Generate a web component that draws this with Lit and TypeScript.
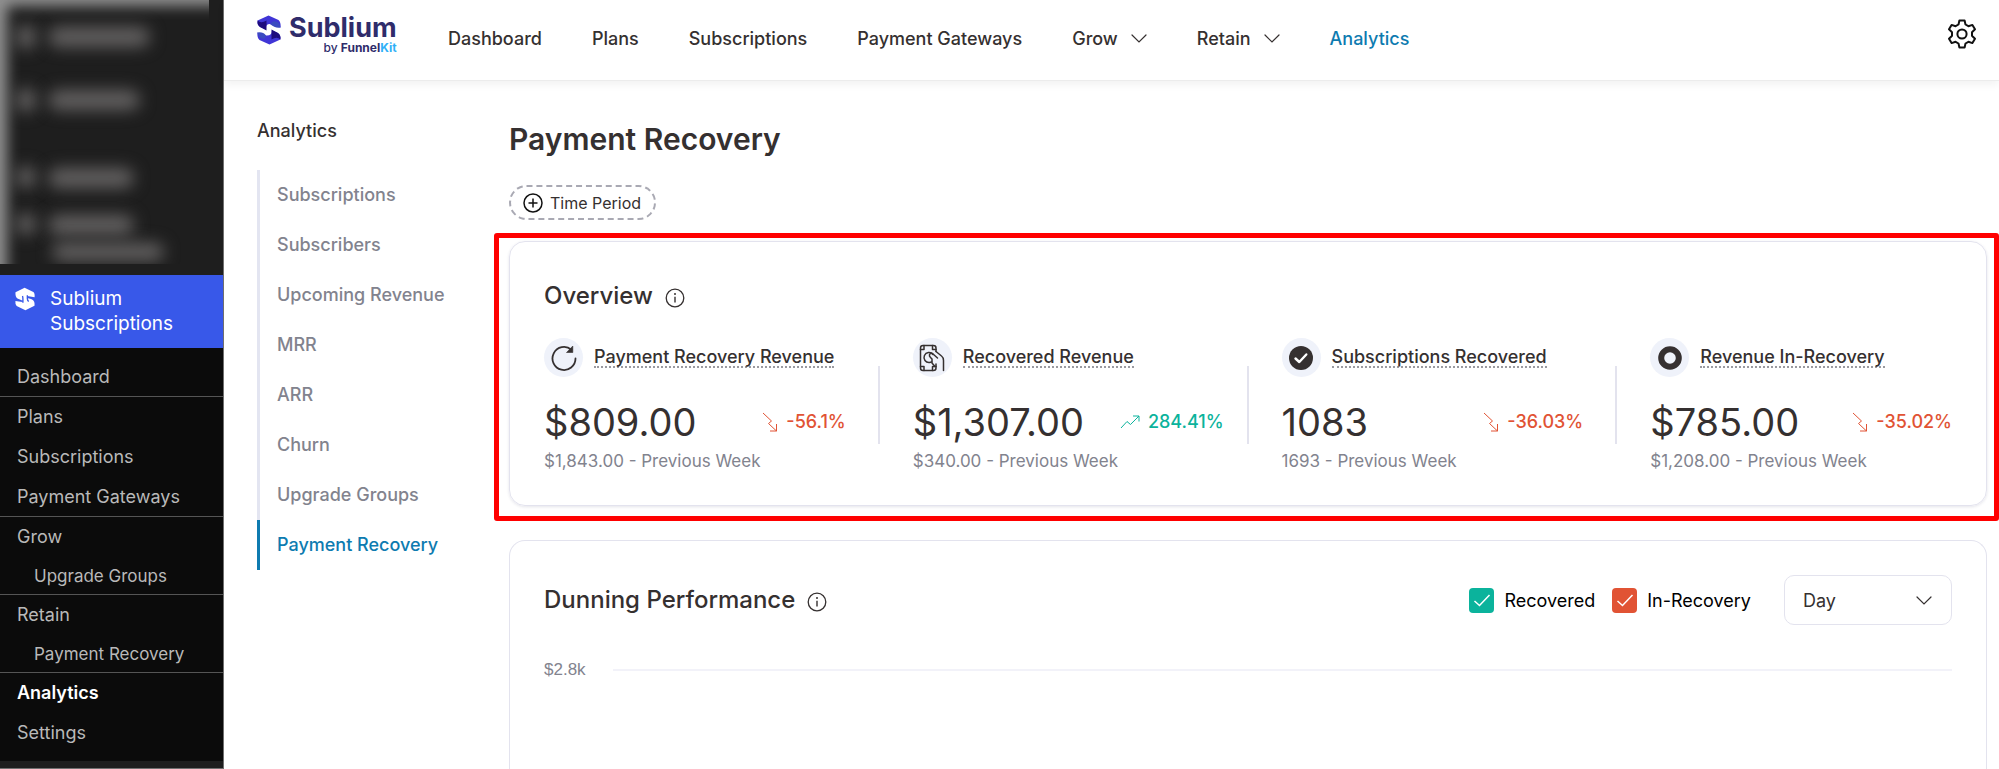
import { LitElement, html, css, svg } from "lit";
import { customElement } from "lit/decorators.js";
import { classMap } from "lit/directives/class-map.js";

type Item = { label: string; kind?: "sub" | "current"; rule?: boolean };

const adminMenu: Item[] = [
  { label: "Dashboard", rule: true },
  { label: "Plans" },
  { label: "Subscriptions" },
  { label: "Payment Gateways", rule: true },
  { label: "Grow" },
  { label: "Upgrade Groups", kind: "sub", rule: true },
  { label: "Retain" },
  { label: "Payment Recovery", kind: "sub", rule: true },
  { label: "Analytics", kind: "current" },
  { label: "Settings" },
];

const topNav = [
  { label: "Dashboard" },
  { label: "Plans" },
  { label: "Subscriptions" },
  { label: "Payment Gateways" },
  { label: "Grow", menu: true },
  { label: "Retain", menu: true },
  { label: "Analytics", active: true },
];

const reports = [
  "Subscriptions",
  "Subscribers",
  "Upcoming Revenue",
  "MRR",
  "ARR",
  "Churn",
  "Upgrade Groups",
  "Payment Recovery",
];

const refreshIcon = svg`<path d="M24.500 13.500A11.500 11.500 0 1 1 20.400 4.700" fill="none" stroke="#353030" stroke-width="1.800" stroke-linecap="round"/><path d="M21.800 1v6.500h-6.300z" fill="#353030" stroke="#353030" stroke-width=".6" stroke-linejoin="round"/>`;
const moneyIcon = svg`<g fill="none" stroke="#353030" stroke-width="1.500" stroke-linejoin="round" stroke-linecap="round"><path d="M17 7.500V4Q17 1.500 14.500 1.500H4Q1.500 1.500 1.500 4V24Q1.500 26.500 4 26.500H14.500Q17 26.500 17 24V20"/><path d="M1.500 5.500H5V1.500M17 5.500H13.500V1.500M1.500 22.500H5V26.500M17 22.500H13.500V26.500"/><path d="M14 10.500A5 5 0 1 0 10.500 18.500L12.500 18"/><path d="M18.500 14L13.500 9.500Q11.500 8.500 10.500 10.500Q10 12 11.500 13.500L13 15V19L16 22.500"/><path d="M17 7.500L22.500 12Q24.500 13.500 24.500 16.500V26.500"/></g>`;
const checkIcon = svg`<circle cx="13" cy="13" r="12" fill="#353030"/><path d="M7.500 13.500l3.800 3.500 7-7.500" fill="none" stroke="#fff" stroke-width="2.400" stroke-linecap="round" stroke-linejoin="round"/>`;
const ringIcon = svg`<circle cx="13" cy="13" r="8.800" fill="none" stroke="#353030" stroke-width="6"/>`;

const stats = [
  { label: "Payment Recovery Revenue", value: "$809.00", prev: "$1,843.00", change: "-56.1%", up: false, icon: refreshIcon },
  { label: "Recovered Revenue", value: "$1,307.00", prev: "$340.00", change: "284.41%", up: true, icon: moneyIcon },
  { label: "Subscriptions Recovered", value: "1083", prev: "1693", change: "-36.03%", up: false, icon: checkIcon },
  { label: "Revenue In-Recovery", value: "$785.00", prev: "$1,208.00", change: "-35.02%", up: false, icon: ringIcon },
];

const chevron = html`<svg class="chevron" viewBox="0 0 16 9" width="16" height="9"><path d="M1 1l7 7 7-7" fill="none" stroke="currentColor" stroke-width="1.200" stroke-linecap="round"/></svg>`;
const info = html`<svg viewBox="0 0 20 20" width="20" height="20"><circle cx="10" cy="10" r="8.800" fill="none" stroke="#353030" stroke-width="1.300"/><circle cx="10" cy="6" r="1" fill="#353030"/><path d="M10 8.800v5.700" stroke="#353030" stroke-width="1.400"/></svg>`;

@customElement("admin-sidebar")
class AdminSidebar extends LitElement {
  static styles = css`
    :host { display: flex; flex-direction: column; background: #1e1e1e; border-right: 1px solid #6f6f6f; }
    .hidden { position: relative; height: 264px; width: 209px; overflow: hidden; margin-bottom: 11px; }
    .glow { position: absolute; inset: 0 -30px -30px 0; box-shadow: inset 5px 4px 14px 2px #949494; }
    .blob { position: absolute; border-radius: 12px; background: #626060; filter: blur(8px); }
    .brand { display: flex; gap: 15px; padding: 11px 15px 12px; background: #3858e9; color: #fff; font-size: 19px; line-height: 25px; text-decoration: none; }
    .brand svg { flex: none; margin-top: 1px; }
    .list { display: flex; flex-direction: column; list-style: none; margin: 0; padding: 9px 0 8px; background: #0b0b0b; }
    .link { display: block; padding: 0 17px; line-height: 40px; font-size: 18px; color: #b9b9b9; text-decoration: none; }
    .sub { padding-left: 34px; font-size: 17px; line-height: 38px; }
    .current { color: #fff; font-weight: 600; }
    .rule { box-shadow: inset 0 -1px #555; }
    .foot { height: 7px; border-bottom: 1px solid #6f6f6f; }
  `;
  render() {
    const blobs = [
      [16, 25, 20, 24], [48, 27, 102, 20], [16, 88, 20, 24], [48, 90, 92, 20],
      [16, 166, 20, 22], [48, 168, 86, 20], [16, 213, 20, 22], [48, 215, 86, 20], [52, 243, 112, 18],
    ];
    return html`
      <div class="hidden">
        ${blobs.map(([l, t, w, h]) => html`<span class="blob" style="left:${l}px;top:${t}px;width:${w}px;height:${h}px"></span>`)}
        <div class="glow"></div>
      </div>
      <a class="brand" href="#">
        <svg viewBox="0 0 24 28" width="20" height="24" fill="#fff"><path d="M11.500.6L22 5.600Q24 7 23.500 12L14.500 10.500V17.500Q7 15.500 3 13.500Q0 11.500 .6 6Z"/><path d="M12.500 27.400L2 22.400Q0 21 .5 16.500L9 17.500L11 12.500Q18 13 21 15Q24 17 23.400 22Z"/><path d="M9 10.500Q9.500 12 9.500 14V18.500M14.800 9.500V13.500Q15 16 16.500 17" fill="none" stroke="#3858e9" stroke-width="1.600"/></svg>
        <span>Sublium<br />Subscriptions</span>
      </a>
      <ul class="list">
        ${adminMenu.map((i) => html`<li class=${classMap({ rule: !!i.rule })}>
          <a href="#" class=${classMap({ link: true, sub: i.kind === "sub", current: i.kind === "current" })}>${i.label}</a>
        </li>`)}
      </ul>
      <div class="foot"></div>
    `;
  }
}

@customElement("top-bar")
class TopBar extends LitElement {
  static styles = css`
    :host { display: flex; align-items: flex-start; height: 81px; box-sizing: border-box; padding: 0 22px 0 33px; background: #fff; border-bottom: 1px solid #ececec; box-shadow: 0 4px 8px rgba(0, 0, 0, 0.05); position: relative; }
    .logo { display: flex; gap: 8px; width: 191px; padding-top: 14px; text-decoration: none; color: #2f2c6b; }
    .logo svg { flex: none; margin-top: 1px; }
    .words { display: flex; flex-direction: column; align-items: flex-end; }
    .name { font-size: 27px; font-weight: 700; line-height: 28px; }
    .by { font-size: 12px; line-height: 12px; font-weight: 500; }
    .by b { font-weight: 700; }
    .kit { color: #2fb0f7; }
    .nav { display: flex; gap: 50px; }
    .link { display: flex; align-items: center; gap: 13px; font-size: 18px; line-height: 77px; font-weight: 500; color: #353030; text-decoration: none; }
    .active { color: #0e7bb0; }
    .gear { margin-left: auto; padding: 19px 0 0; border: 0; background: none; line-height: 0; }
  `;
  render() {
    return html`
      <a class="logo" href="#">
        <svg viewBox="0 0 24 30" width="24" height="30">
          <path d="M11.500.5L21.500 5Q24 7 23.600 12.500L13 9Q8 9 9 14.500L3 12Q0 10 .6 5.500Z" fill="#4035d6"/>
          <path d="M.6 5.500Q4 9 9.500 5.500V15.500L3 12Q0 10 .6 5.500Z" fill="#1e0b7d"/>
          <path d="M13 9L16 6.500Q22 5 23.600 12.500Q18 13.500 13 9Z" fill="#3b4bc0"/>
          <path d="M12.500 29.500L2.500 25Q0 23 .4 17.500L9 20.500Q15 21 15 15.500L21 18Q24 20 23.400 24.500Z" fill="#4035d6"/>
          <path d="M23.400 24.500Q20 21 14.500 24.500V14.500L21 18Q24 20 23.400 24.500Z" fill="#1e0b7d"/>
          <path d="M9 20.500L8 23.500Q2 25 .4 17.500Q6 16.500 9 20.500Z" fill="#3b4bc0"/>
        </svg>
        <span class="words"><span class="name">Sublium</span><span class="by">by <b>Funnel<span class="kit">Kit</span></b></span></span>
      </a>
      <nav class="nav">
        ${topNav.map((n) => html`<a href="#" class=${classMap({ link: true, active: !!n.active })}>${n.label}${n.menu ? chevron : ""}</a>`)}
      </nav>
      <button class="gear" aria-label="Settings">
        <svg viewBox="0 0 30 30" width="30" height="30" fill="none" stroke="#111" stroke-width="2" stroke-linejoin="round"><circle cx="15" cy="15" r="4.600"/><path d="M12.400 1.500h5.200l.9 4 2.900 1.700 4-1.300 2.600 4.400-3 2.900v3.600l3 2.900-2.600 4.400-4-1.300-2.900 1.700-.9 4h-5.200l-.9-4-2.900-1.700-4 1.300L2 19.700l3-2.900v-3.600l-3-2.900 2.600-4.400 4 1.300 2.900-1.700z"/></svg>
      </button>
    `;
  }
}

@customElement("report-nav")
class ReportNav extends LitElement {
  static styles = css`
    :host { display: block; }
    .title { margin: 0 0 25px; font-size: 18px; line-height: 28px; font-weight: 500; color: #353030; }
    .list { margin: 0; padding: 0; list-style: none; }
    .link { display: block; padding-left: 17px; border-left: 3px solid #e3e5f1; font-size: 18px; line-height: 50px; height: 50px; font-weight: 500; color: #82838e; text-decoration: none; }
    .active { color: #0e7bb0; border-color: #0e7bb0; }
  `;
  render() {
    return html`
      <h2 class="title">Analytics</h2>
      <ul class="list">
        ${reports.map((r) => html`<li><a href="#" class=${classMap({ link: true, active: r === "Payment Recovery" })}>${r}</a></li>`)}
      </ul>
    `;
  }
}

@customElement("overview-card")
class OverviewCard extends LitElement {
  static styles = css`
    :host { display: block; border: 5px solid #f00; border-radius: 3px; padding: 3px 7px 10px 10px; }
    .card { border: 1px solid #e3e3ee; border-radius: 16px; padding: 38px 34px 32px; box-shadow: 0 1px 3px rgba(40, 40, 90, 0.12); }
    .title { display: flex; align-items: center; gap: 12px; margin: 0; font-size: 24px; line-height: 32px; font-weight: 500; color: #353030; }
    .title svg { margin-top: 4px; }
    .grid { display: grid; grid-template-columns: repeat(4, minmax(0, 1fr)); column-gap: 67px; margin-top: 26px; }
    .stat { position: relative; }
    .stat + .stat::before { content: ""; position: absolute; left: -35px; top: 28px; width: 2px; height: 78px; background: #e3e3ee; }
    .head { display: flex; align-items: center; gap: 11px; height: 39px; }
    .disc { display: grid; place-items: center; width: 39px; height: 39px; border-radius: 50%; background: #eff2fa; flex: none; }
    .label { font-size: 18px; line-height: 19px; font-weight: 500; color: #353030; border-bottom: 2px dotted #9a9aa0; white-space: nowrap; }
    .row { display: flex; align-items: center; justify-content: space-between; gap: 36px; margin-top: 21px; height: 48px; white-space: nowrap; }
    .value { font-size: 38px; line-height: 48px; font-weight: 400; color: #353030; }
    .change { display: flex; align-items: center; gap: 8px; font-size: 18px; line-height: 24px; font-weight: 500; color: #e15334; }
    .up { color: #0bb39c; }
    .prev { margin-top: 3px; font-size: 17px; line-height: 24px; font-weight: 400; color: #82838e; }
  `;
  render() {
    return html`
      <section class="card">
        <h2 class="title">Overview ${info}</h2>
        <div class="grid">
          ${stats.map((s) => html`<div class="stat">
            <div class="head"><span class="disc"><svg viewBox=${s.icon === moneyIcon ? "0 0 26 28" : "0 0 26 26"} width="26" height="28">${s.icon}</svg></span><span class="label">${s.label}</span></div>
            <div class="row">
              <span class="value">${s.value}</span>
              <span class=${classMap({ change: true, up: s.up })}>
                ${s.up
                  ? html`<svg viewBox="0 0 20 14" width="20" height="14" fill="none" stroke="currentColor" stroke-width="1"><path d="M1 13l6-6.500 3.500 3L19 1M13 1h6v5.500"/></svg>`
                  : html`<svg viewBox="0 0 16 20" width="16" height="20" fill="none" stroke="currentColor" stroke-width="1"><path d="M1 1l8.500 8L6.500 11.500 14.500 19M8 19h6.500v-7"/></svg>`}
                ${s.change}</span>
            </div>
            <div class="prev">${s.prev} - Previous Week</div>
          </div>`)}
        </div>
      </section>
    `;
  }
}

@customElement("dunning-card")
class DunningCard extends LitElement {
  static styles = css`
    :host { display: block; flex: 1; margin: 19px 12px 0 15px; border: 1px solid #e3e3ee; border-bottom: 0; border-radius: 16px 16px 0 0; padding: 34px 34px 0; }
    .bar { display: flex; align-items: center; height: 50px; }
    .title { display: flex; align-items: center; gap: 12px; margin: 0 auto 0 0; font-size: 24px; line-height: 32px; font-weight: 500; color: #353030; }
    .title svg { margin-top: 4px; }
    .check { display: flex; align-items: center; gap: 10px; margin-right: 17px; font-size: 18px; font-weight: 400; color: #000; }
    .tick { position: relative; display: grid; place-items: center; }
    .box { appearance: none; width: 25px; height: 25px; margin: 0; border-radius: 4px; background: #0bb39c; }
    .red { background: #e15334; }
    .tick svg { position: absolute; pointer-events: none; }
    .pick { position: relative; display: flex; align-items: center; margin-left: 16px; }
    .select { appearance: none; width: 168px; height: 50px; padding: 0 18px; border: 1px solid #e3e3ee; border-radius: 10px; background: #fff; font: 400 18px Inter, sans-serif; color: #353030; }
    .pick svg { position: absolute; right: 20px; pointer-events: none; color: #353030; }
    .axis { display: flex; align-items: center; gap: 27px; margin-top: 33px; font: 400 17px/24px "Liberation Sans", Arial, sans-serif; color: #82838e; }
    .line { flex: 1; height: 2px; background: #f2f2f9; }
  `;
  render() {
    const tick = html`<svg viewBox="0 0 18 14" width="18" height="14"><path d="M1.500 8l5 4.500L16.500 2" fill="none" stroke="#fff" stroke-width="1.500"/></svg>`;
    return html`
      <div class="bar">
        <h2 class="title">Dunning Performance ${info}</h2>
        <label class="check"><span class="tick"><input class="box" type="checkbox" checked />${tick}</span>Recovered</label>
        <label class="check"><span class="tick"><input class="box red" type="checkbox" checked />${tick}</span>In-Recovery</label>
        <div class="pick"><select class="select" aria-label="Interval"><option>Day</option></select>${chevron}</div>
      </div>
      <div class="axis"><span>$2.8k</span><span class="line"></span></div>
    `;
  }
}

@customElement("app-root")
class AppRoot extends LitElement {
  static styles = css`
    :host { display: grid; grid-template-columns: 224px minmax(0, 1fr); height: 100vh; overflow: hidden; background: #fff; font-family: Inter, sans-serif; align-items: start; }
    .main { display: flex; flex-direction: column; min-height: 100vh; }
    .body { flex: 1; display: grid; grid-template-columns: 237px minmax(0, 1fr); padding: 36px 0 0 33px; }
    .page { display: flex; flex-direction: column; }
    .title { margin: 0 0 0 15px; font-size: 30px; line-height: 44px; font-weight: 600; color: #353030; }
    .period { align-self: flex-start; display: flex; align-items: center; gap: 7px; height: 35px; margin: 24px 0 13px 15px; padding: 0 13px 0 12px; border: 2px dashed #a9a9b3; border-radius: 18px; background: #fff; font: 400 16px Inter, sans-serif; color: #353030; }
  `;
  render() {
    return html`
      <admin-sidebar></admin-sidebar>
      <main class="main">
        <top-bar></top-bar>
        <div class="body">
          <report-nav></report-nav>
          <div class="page">
            <h1 class="title">Payment Recovery</h1>
            <button class="period"><svg viewBox="0 0 20 20" width="20" height="20" fill="none" stroke="#111" stroke-width="1.500"><circle cx="10" cy="10" r="9"/><path d="M10 5.500v9M5.500 10h9"/></svg>Time Period</button>
            <overview-card></overview-card>
            <dunning-card></dunning-card>
          </div>
        </div>
      </main>
    `;
  }
}
